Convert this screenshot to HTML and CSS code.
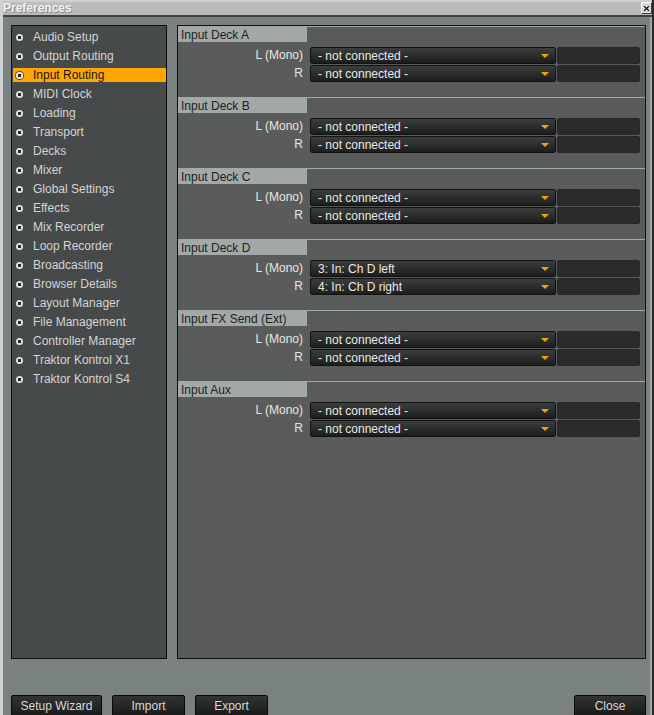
FILE: index.html
```html
<!DOCTYPE html>
<html lang="en">

<head>
    <meta charset="UTF-8">
    <title>Preferences</title>
    <link rel="stylesheet" href="styles.css">
</head>

<body>
    <div class="window">
        <header class="titlebar">
            <span class="title">Preferences</span>
            <span class="close-x">
                <svg width="11" height="11" viewBox="0 0 11 11"><path d="M2.5 2.5 L8.5 8.5 M8.5 2.5 L2.5 8.5" stroke="#000" stroke-width="1.3"/></svg>
            </span>
        </header>
        <div class="body">
            <div class="main">
                <ul class="sidebar">
                    <li><i class="dot"></i>Audio Setup</li>
                    <li><i class="dot"></i>Output Routing</li>
                    <li class="active"><i class="dot"></i>Input Routing</li>
                    <li><i class="dot"></i>MIDI Clock</li>
                    <li><i class="dot"></i>Loading</li>
                    <li><i class="dot"></i>Transport</li>
                    <li><i class="dot"></i>Decks</li>
                    <li><i class="dot"></i>Mixer</li>
                    <li><i class="dot"></i>Global Settings</li>
                    <li><i class="dot"></i>Effects</li>
                    <li><i class="dot"></i>Mix Recorder</li>
                    <li><i class="dot"></i>Loop Recorder</li>
                    <li><i class="dot"></i>Broadcasting</li>
                    <li><i class="dot"></i>Browser Details</li>
                    <li><i class="dot"></i>Layout Manager</li>
                    <li><i class="dot"></i>File Management</li>
                    <li><i class="dot"></i>Controller Manager</li>
                    <li><i class="dot"></i>Traktor Kontrol X1</li>
                    <li><i class="dot"></i>Traktor Kontrol S4</li>
                </ul>
                <section class="panel">
                    <div class="group">
                        <h2>Input Deck A</h2>
                        <div class="row"><label>L (Mono)</label><div class="select">- not connected -</div><div class="meter"></div></div>
                        <div class="row"><label>R</label><div class="select">- not connected -</div><div class="meter"></div></div>
                    </div>
                    <div class="group">
                        <h2>Input Deck B</h2>
                        <div class="row"><label>L (Mono)</label><div class="select">- not connected -</div><div class="meter"></div></div>
                        <div class="row"><label>R</label><div class="select">- not connected -</div><div class="meter"></div></div>
                    </div>
                    <div class="group">
                        <h2>Input Deck C</h2>
                        <div class="row"><label>L (Mono)</label><div class="select">- not connected -</div><div class="meter"></div></div>
                        <div class="row"><label>R</label><div class="select">- not connected -</div><div class="meter"></div></div>
                    </div>
                    <div class="group">
                        <h2>Input Deck D</h2>
                        <div class="row"><label>L (Mono)</label><div class="select">3: In: Ch D left</div><div class="meter"></div></div>
                        <div class="row"><label>R</label><div class="select">4: In: Ch D right</div><div class="meter"></div></div>
                    </div>
                    <div class="group">
                        <h2>Input FX Send (Ext)</h2>
                        <div class="row"><label>L (Mono)</label><div class="select">- not connected -</div><div class="meter"></div></div>
                        <div class="row"><label>R</label><div class="select">- not connected -</div><div class="meter"></div></div>
                    </div>
                    <div class="group">
                        <h2>Input Aux</h2>
                        <div class="row"><label>L (Mono)</label><div class="select">- not connected -</div><div class="meter"></div></div>
                        <div class="row"><label>R</label><div class="select">- not connected -</div><div class="meter"></div></div>
                    </div>
                </section>
            </div>
            <footer class="buttons">
                <button class="wide">Setup Wizard</button>
                <button>Import</button>
                <button>Export</button>
                <button class="close">Close</button>
            </footer>
        </div>
    </div>
</body>

</html>
```

FILE: styles.css
```css
* {
    box-sizing: border-box;
    padding: 0;
    margin: 0;
}

body {
    font-family: "Liberation Sans", Arial, sans-serif;
    font-size: 12px;
    background: #7a8181;
    overflow: hidden;
}

.window {
    width: 654px;
    height: 730px;
    border-left: 3px solid #d2d2d2;
    border-right: 2px solid #2b2b2b;
    display: flex;
    flex-direction: column;
}

.titlebar {
    height: 17px;
    background: linear-gradient(#d6d6d6, #bdbdbd 3px, #b9b9b9);
    border-bottom: 2px solid #3e4242;
    display: flex;
    align-items: flex-start;
    justify-content: space-between;
}

.title {
    font-weight: bold;
    color: #f2f2f2;
    text-shadow: 1px 1px 0 #8a8a8a;
    line-height: 15px;
    padding-top: 1px;
}

.close-x {
    width: 11px;
    height: 12px;
    margin-top: 2px;
    background: #d8d8d8;
    border: 1px solid;
    border-color: #fff #404040 #404040 #fff;
    display: flex;
    align-items: center;
    justify-content: center;
}

.body {
    flex: 1;
    border-right: 2px solid #a0a8a8;
    padding: 8px 4px 0 8px;
}

.main {
    display: flex;
    gap: 10px;
    height: 634px;
}

.sidebar {
    list-style: none;
    width: 156px;
    background: #464a4a;
    border: 1px solid #0e0e0e;
    padding: 4px 0 0 1px;
    display: flex;
    flex-direction: column;
    gap: 5px;
}

.sidebar li {
    height: 14px;
    line-height: 16px;
    color: #d4d4d4;
    display: flex;
    align-items: center;
}

.sidebar li.active {
    background: #ffa700;
    color: #151515;
}

.dot {
    width: 7px;
    height: 7px;
    border-radius: 50%;
    background: radial-gradient(circle, #2a2a2a 0 1.6px, #e4e4e4 2px);
    margin: 0 10px 0 3px;
}

.active .dot {
    box-shadow: 0 0 0 1px #5a4a20;
}

.panel {
    width: 469px;
    background: #5a5b5b;
    border: 1px solid #101010;
}

.group {
    border-top: 1px solid #a3a9a9;
    padding-bottom: 16px;
}

.group h2 {
    width: 129px;
    height: 15px;
    line-height: 16px;
    font-size: 12px;
    font-weight: normal;
    background: #a3a9a9;
    color: #202222;
    padding-left: 3px;
    margin-bottom: 5px;
}

.row {
    display: grid;
    grid-template-columns: 131px 246px 83px;
    column-gap: 1px;
    height: 16px;
    margin-bottom: 2px;
}

.row:last-child {
    margin-bottom: 0;
}

.row label {
    text-align: right;
    padding-right: 6px;
    color: #e6e6e6;
    line-height: 17px;
}

.select {
    position: relative;
    background: linear-gradient(#3c3e3e, #1c1e1e);
    border: 1px solid #111;
    border-radius: 2px;
    color: #e8e8e8;
    padding: 1px 0 0 7px;
    line-height: 14px;
}

.select::after {
    content: "";
    position: absolute;
    right: 6px;
    top: 6px;
    border-left: 4px solid transparent;
    border-right: 4px solid transparent;
    border-top: 4px solid #f5a300;
}

.meter {
    background: #2a2c2c;
    border: 1px solid #262828;
    border-radius: 2px;
}

.buttons {
    display: flex;
    gap: 10px;
    margin-top: 36px;
}

.buttons button {
    font-family: "Liberation Sans", Arial, sans-serif;
    font-size: 12px;
    width: 73px;
    height: 22px;
    color: #d8d8d8;
    background: linear-gradient(#323434, #1a1b1b);
    border: 1px solid #080808;
    border-radius: 2px;
}

.buttons .wide {
    width: 91px;
}

.buttons .close {
    width: 72px;
    margin-left: auto;
}
```
